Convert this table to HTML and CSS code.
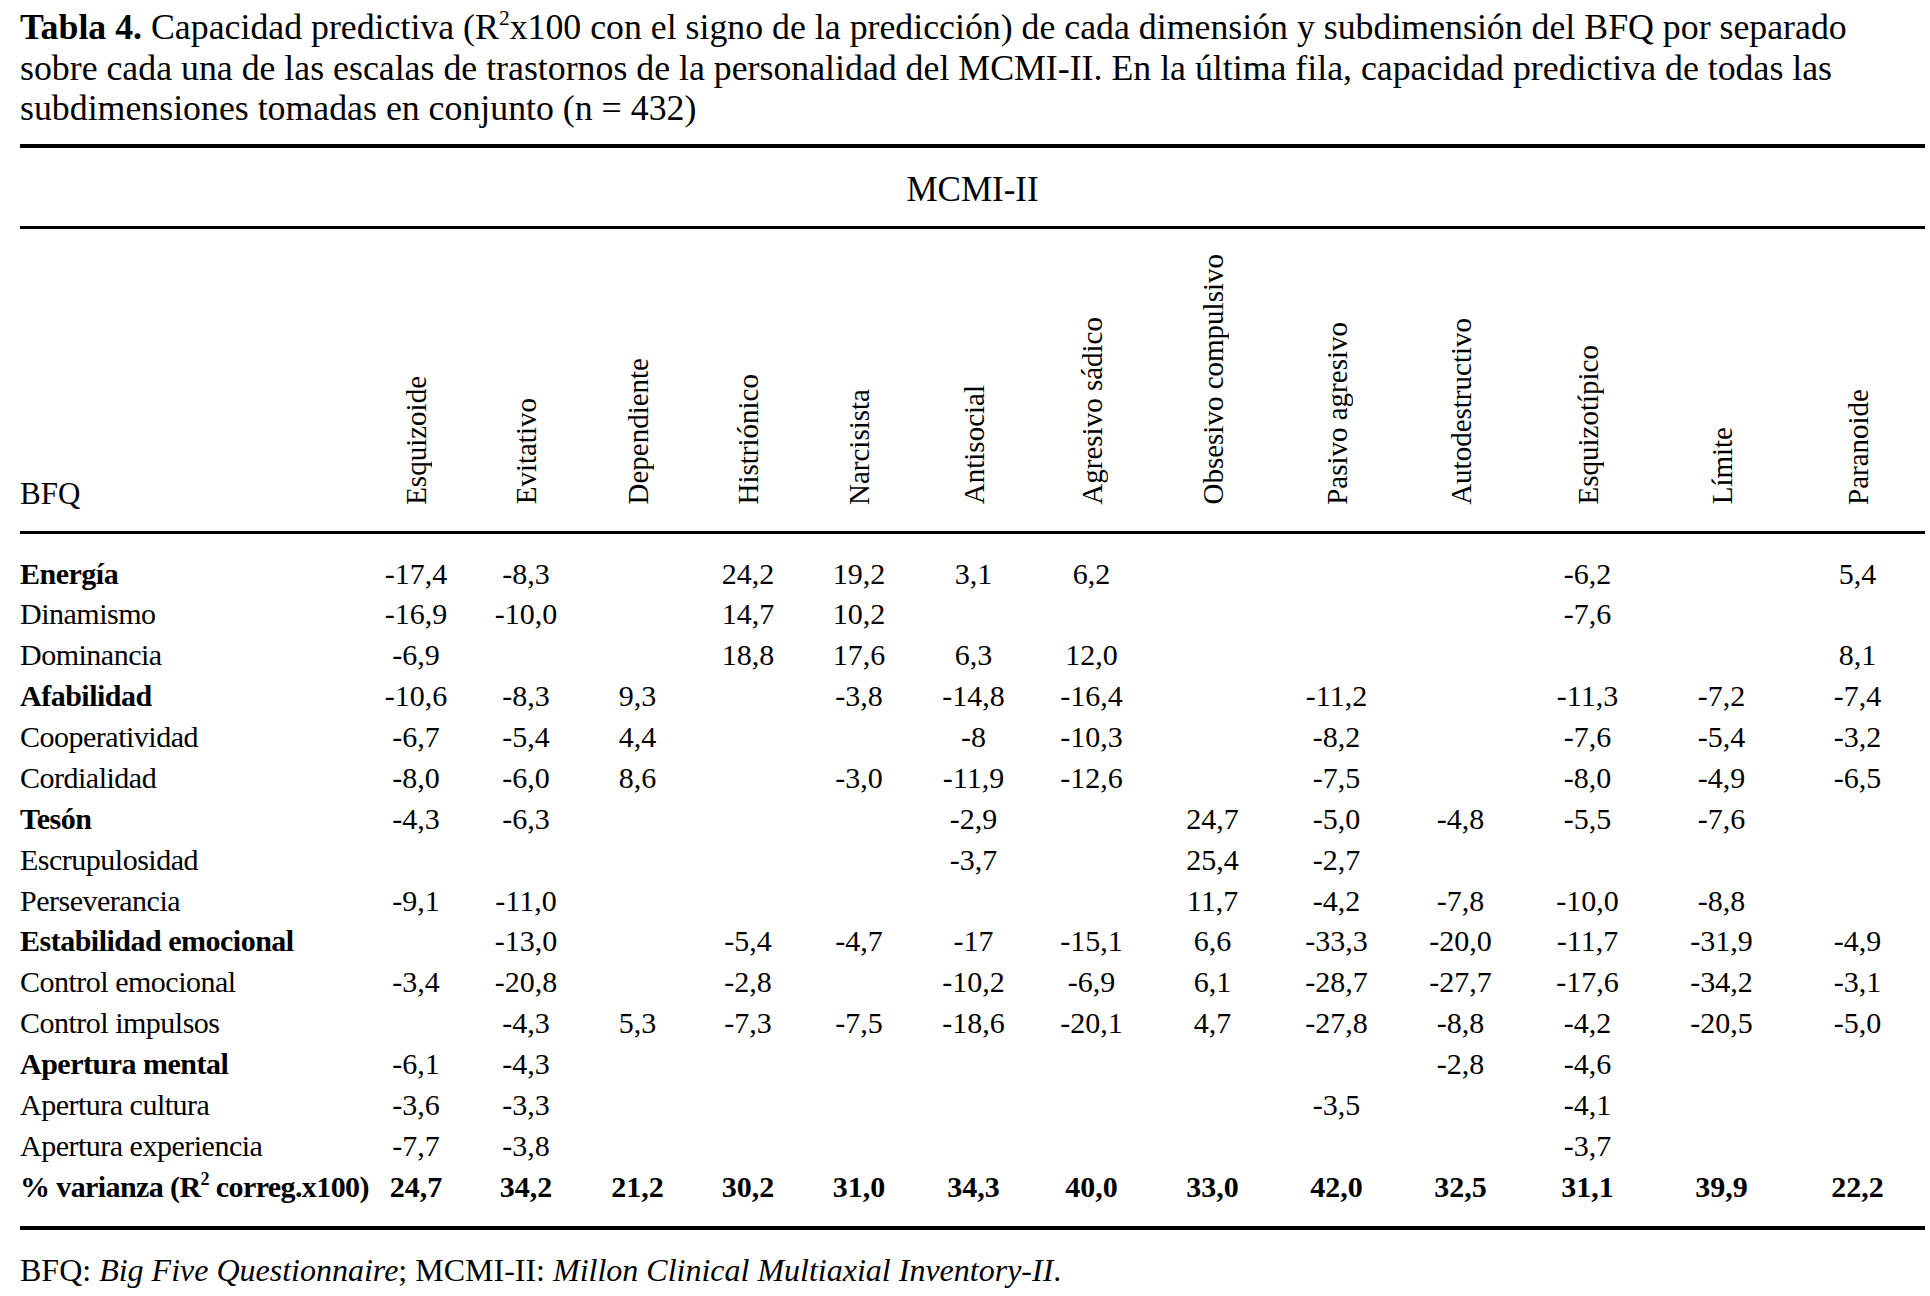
FILE: index.html
```html
<!DOCTYPE html>
<html lang="es">
<head>
<meta charset="utf-8">
<title>Tabla 4</title>
<link rel="stylesheet" href="styles.css">
</head>
<body>
<div class="page">
  <p class="caption"><b>Tabla 4.</b> Capacidad predictiva (R<sup>2</sup>x100 con el signo de la predicción) de cada dimensión y subdimensión del BFQ por separado sobre cada una de las escalas de trastornos de la personalidad del MCMI-II. En la última fila, capacidad predictiva de todas las subdimensiones tomadas en conjunto (n = 432)</p>
  <table class="data">
    <colgroup>
      <col class="w-label"><col class="w1"><col class="w2"><col class="w3"><col class="w4"><col class="w5"><col class="w6"><col class="w7"><col class="w8"><col class="w9"><col class="w10"><col class="w11"><col class="w12"><col class="w13">
    </colgroup>
    <thead>
      <tr class="group-row"><th colspan="14" class="group">MCMI-II</th></tr>
      <tr class="head-row">
        <th class="bfq">BFQ</th>
        <th class="rot"><span>Esquizoide</span></th>
        <th class="rot"><span>Evitativo</span></th>
        <th class="rot"><span>Dependiente</span></th>
        <th class="rot"><span>Histriónico</span></th>
        <th class="rot"><span>Narcisista</span></th>
        <th class="rot"><span>Antisocial</span></th>
        <th class="rot"><span>Agresivo sádico</span></th>
        <th class="rot"><span>Obsesivo compulsivo</span></th>
        <th class="rot"><span>Pasivo agresivo</span></th>
        <th class="rot"><span>Autodestructivo</span></th>
        <th class="rot"><span>Esquizotípico</span></th>
        <th class="rot"><span>Límite</span></th>
        <th class="rot"><span>Paranoide</span></th>
      </tr>
    </thead>
    <tbody>
      <tr class="dim first"><td>Energía</td><td>-17,4</td><td>-8,3</td><td></td><td>24,2</td><td>19,2</td><td>3,1</td><td>6,2</td><td></td><td></td><td></td><td>-6,2</td><td></td><td>5,4</td></tr>
      <tr><td>Dinamismo</td><td>-16,9</td><td>-10,0</td><td></td><td>14,7</td><td>10,2</td><td></td><td></td><td></td><td></td><td></td><td>-7,6</td><td></td><td></td></tr>
      <tr><td>Dominancia</td><td>-6,9</td><td></td><td></td><td>18,8</td><td>17,6</td><td>6,3</td><td>12,0</td><td></td><td></td><td></td><td></td><td></td><td>8,1</td></tr>
      <tr class="dim"><td>Afabilidad</td><td>-10,6</td><td>-8,3</td><td>9,3</td><td></td><td>-3,8</td><td>-14,8</td><td>-16,4</td><td></td><td>-11,2</td><td></td><td>-11,3</td><td>-7,2</td><td>-7,4</td></tr>
      <tr><td>Cooperatividad</td><td>-6,7</td><td>-5,4</td><td>4,4</td><td></td><td></td><td>-8</td><td>-10,3</td><td></td><td>-8,2</td><td></td><td>-7,6</td><td>-5,4</td><td>-3,2</td></tr>
      <tr><td>Cordialidad</td><td>-8,0</td><td>-6,0</td><td>8,6</td><td></td><td>-3,0</td><td>-11,9</td><td>-12,6</td><td></td><td>-7,5</td><td></td><td>-8,0</td><td>-4,9</td><td>-6,5</td></tr>
      <tr class="dim"><td>Tesón</td><td>-4,3</td><td>-6,3</td><td></td><td></td><td></td><td>-2,9</td><td></td><td>24,7</td><td>-5,0</td><td>-4,8</td><td>-5,5</td><td>-7,6</td><td></td></tr>
      <tr><td>Escrupulosidad</td><td></td><td></td><td></td><td></td><td></td><td>-3,7</td><td></td><td>25,4</td><td>-2,7</td><td></td><td></td><td></td><td></td></tr>
      <tr><td>Perseverancia</td><td>-9,1</td><td>-11,0</td><td></td><td></td><td></td><td></td><td></td><td>11,7</td><td>-4,2</td><td>-7,8</td><td>-10,0</td><td>-8,8</td><td></td></tr>
      <tr class="dim"><td>Estabilidad emocional</td><td></td><td>-13,0</td><td></td><td>-5,4</td><td>-4,7</td><td>-17</td><td>-15,1</td><td>6,6</td><td>-33,3</td><td>-20,0</td><td>-11,7</td><td>-31,9</td><td>-4,9</td></tr>
      <tr><td>Control emocional</td><td>-3,4</td><td>-20,8</td><td></td><td>-2,8</td><td></td><td>-10,2</td><td>-6,9</td><td>6,1</td><td>-28,7</td><td>-27,7</td><td>-17,6</td><td>-34,2</td><td>-3,1</td></tr>
      <tr><td>Control impulsos</td><td></td><td>-4,3</td><td>5,3</td><td>-7,3</td><td>-7,5</td><td>-18,6</td><td>-20,1</td><td>4,7</td><td>-27,8</td><td>-8,8</td><td>-4,2</td><td>-20,5</td><td>-5,0</td></tr>
      <tr class="dim"><td>Apertura mental</td><td>-6,1</td><td>-4,3</td><td></td><td></td><td></td><td></td><td></td><td></td><td></td><td>-2,8</td><td>-4,6</td><td></td><td></td></tr>
      <tr><td>Apertura cultura</td><td>-3,6</td><td>-3,3</td><td></td><td></td><td></td><td></td><td></td><td></td><td>-3,5</td><td></td><td>-4,1</td><td></td><td></td></tr>
      <tr><td>Apertura experiencia</td><td>-7,7</td><td>-3,8</td><td></td><td></td><td></td><td></td><td></td><td></td><td></td><td></td><td>-3,7</td><td></td><td></td></tr>
      <tr class="dim total"><td>% varianza (R<sup>2</sup> correg.x100)</td><td>24,7</td><td>34,2</td><td>21,2</td><td>30,2</td><td>31,0</td><td>34,3</td><td>40,0</td><td>33,0</td><td>42,0</td><td>32,5</td><td>31,1</td><td>39,9</td><td>22,2</td></tr>
    </tbody>
  </table>
  <p class="note">BFQ: <i>Big Five Questionnaire</i>; MCMI-II: <i>Millon Clinical Multiaxial Inventory-II</i>.</p>
</div>
</body>
</html>
```
FILE: styles.css
```css
html, body {
  margin: 0;
  padding: 0;
  background: #fff;
}
body {
  font-family: "Liberation Serif", "Times New Roman", serif;
  color: #000;
}
.page {
  padding: 7px 0 0 20px;
  width: 1905px;
}
.caption {
  margin: 0 0 15px 0;
  font-size: 35.8px;
  line-height: 40.5px;
  width: 1870px;
}
.caption sup, .total sup {
  font-size: 0.6em;
  line-height: 0;
  vertical-align: 0.65em;
}
.data {
  width: 1905px;
  border-collapse: collapse;
  table-layout: fixed;
  border-top: 4px solid #000;
  border-bottom: 4px solid #000;
}
.w-label { width: 342px; }
.w1 { width: 108px; }
.w2 { width: 112px; }
.w3 { width: 111px; }
.w4 { width: 110px; }
.w5 { width: 112px; }
.w6 { width: 117px; }
.w7 { width: 119px; }
.w8 { width: 123px; }
.w9 { width: 125px; }
.w10 { width: 123px; }
.w11 { width: 131px; }
.w12 { width: 137px; }
.w13 { width: 135px; }
.data th, .data td {
  padding: 0;
  font-weight: normal;
}
.group-row th {
  height: 72px;
  border-bottom: 3px solid #000;
  font-size: 35px;
  text-align: center;
  vertical-align: middle;
  padding-top: 6px;
}
.head-row th {
  height: 280px;
  border-bottom: 3px solid #000;
  vertical-align: bottom;
  padding-bottom: 22px;
}
.head-row .bfq {
  text-align: left;
  font-size: 31px;
  line-height: 30px;
  padding-bottom: 22px;
}
.rot span {
  display: inline-block;
  writing-mode: vertical-rl;
  transform: rotate(180deg);
  font-size: 29px;
  line-height: 34px;
  white-space: nowrap;
}
.data tbody td {
  font-size: 30px;
  line-height: 40.87px;
  text-align: center;
  white-space: nowrap;
}
.data tbody td:first-child {
  text-align: left;
  letter-spacing: -0.5px;
}
.data tbody tr.first td {
  padding-top: 20px;
}
.data tbody tr.total td {
  padding-bottom: 18px;
}
.data tbody tr.total td:first-child {
  letter-spacing: -0.6px;
}
.dim td:first-child {
  font-weight: bold;
}
.total td {
  font-weight: bold;
}
.note {
  margin: 22px 0 0 0;
  font-size: 32px;
  line-height: 36px;
}
```
